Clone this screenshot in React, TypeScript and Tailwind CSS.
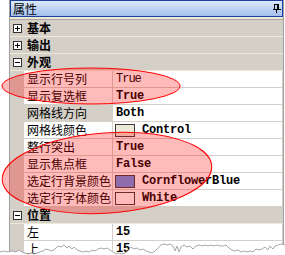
import React from "react";

const TORN: [number, number][] = [
  [0, 252], [4, 251], [8, 252], [12, 251], [16, 252], [19, 250], [22, 252], [25, 253], [28, 254], [31, 253],
  [34, 254], [37, 253], [40, 252], [43, 251], [46, 249], [49, 250], [52, 251], [55, 249], [58, 246], [61, 247],
  [64, 245], [67, 248], [69, 246], [72, 249], [74, 247], [77, 250], [80, 251], [83, 252], [86, 251], [89, 252],
  [92, 250], [95, 251], [98, 249], [101, 248], [104, 249], [107, 248], [110, 250], [113, 252], [116, 254], [119, 253],
  [122, 254], [125, 253], [128, 251], [131, 247], [134, 249], [137, 248], [140, 250], [143, 249], [146, 251], [149, 252],
  [152, 253], [155, 251], [158, 248], [161, 245], [164, 244], [167, 245], [170, 244], [173, 246], [175, 251], [177, 246],
  [179, 252], [181, 247], [184, 245], [187, 247], [190, 246], [193, 249], [196, 246], [199, 245], [202, 246], [205, 245],
  [208, 246], [211, 245], [214, 246], [217, 245], [220, 246], [223, 246], [226, 245], [229, 248], [232, 250], [235, 251],
  [238, 250], [241, 252], [244, 251], [247, 252], [250, 251], [253, 252], [256, 249], [259, 250], [262, 249], [265, 247],
  [268, 250], [270, 246], [273, 249], [275, 246], [278, 245], [281, 244], [285, 245],
];

function ExpandBox({ open }: { open: boolean }) {
  return (
    <svg width="9" height="9" viewBox="0 0 9 9" className="ml-[3px] shrink-0">
      <rect x="0.5" y="0.5" width="8" height="8" fill="white" stroke="#303030" />
      <rect x="2" y="4" width="5" height="1" fill="#000" />
      {!open && <rect x="4" y="2" width="1" height="5" fill="#000" />}
    </svg>
  );
}

function Category({ label, open }: { label: string; open: boolean }) {
  return (
    <div className="h-[17px] flex items-center bg-[#d4d0c8] border-b border-[#ece9d8]">
      <ExpandBox open={open} />
      <span className="ml-[5px] text-[12px] leading-[16px] font-bold text-black font-['Noto_Sans_CJK_SC','Noto_Sans',sans-serif]">
        {label}
      </span>
    </div>
  );
}

function Prop({
  name,
  value,
  bold = true,
  swatch,
  selected = false,
}: {
  name: string;
  value: string;
  bold?: boolean;
  swatch?: string;
  selected?: boolean;
}) {
  return (
    <div className="h-[17px] flex border-b border-[#d4d0c8]">
      <div className="w-[14px] shrink-0 bg-[#d4d0c8]" />
      <div
        className={
          selected
            ? "w-[88px] shrink-0 flex items-center pl-[3px] bg-[#d4d0c8] overflow-hidden whitespace-nowrap"
            : "w-[88px] shrink-0 flex items-center pl-[3px] bg-white overflow-hidden whitespace-nowrap"
        }
      >
        <span className="text-[12px] leading-[16px] text-black font-['Noto_Sans_CJK_SC','Noto_Sans',sans-serif]">{name}</span>
      </div>
      <div className="w-[170px] shrink-0 flex items-center border-l border-[#d4d0c8] bg-white whitespace-nowrap">
        {swatch && (
          <span className="ml-[2px] w-[20px] h-[13px] shrink-0 border border-[#3a3a3a]" style={{ backgroundColor: swatch }} />
        )}
        <span
          className={
            bold
              ? "text-[12px] leading-[16px] text-black font-bold tracking-[-0.2px] font-['Liberation_Mono',monospace]"
              : "text-[12px] leading-[16px] text-black tracking-[-1px] font-['Liberation_Mono',monospace]"
          }
          style={{ marginLeft: swatch ? 7 : 3 }}
        >
          {value}
        </span>
      </div>
    </div>
  );
}

function Pin() {
  return (
    <svg width="8" height="9" viewBox="0 0 8 9" className="shrink-0">
      <rect x="1" y="0" width="5" height="1" fill="#000" />
      <rect x="1" y="0" width="1" height="5" fill="#000" />
      <rect x="4" y="0" width="2" height="5" fill="#000" />
      <rect x="0" y="5" width="8" height="1" fill="#000" />
      <rect x="3" y="6" width="1" height="3" fill="#000" />
    </svg>
  );
}

export default function App() {
  const pts = TORN.map(([x, y]) => `${x},${y}`).join(" ");
  return (
    <div className="relative w-[285px] h-[255px] overflow-hidden bg-white">
      <div className="ml-[9px] w-[275px] h-[255px] border-l border-r border-[#a0a0a0] bg-[#d4d0c8]">
        <div className="h-[17px] flex items-center justify-between border border-[#1e3f9e] bg-gradient-to-b from-[#dde9f9] to-[#a3bfeb] pl-[2px] pr-[1px]">
          <span className="text-[12px] leading-[15px] text-black font-['Noto_Sans_CJK_SC','Noto_Sans',sans-serif]">属性</span>
          <Pin />
        </div>
        <div className="h-[2px] bg-[#ece9d8]" />
        <div className="border-t border-[#aca899]">
          <Category label="基本" open={false} />
          <Category label="输出" open={false} />
          <Category label="外观" open={true} />
          <Prop name="显示行号列" value="True" bold={false} />
          <Prop name="显示复选框" value="True" />
          <Prop name="网格线方向" value="Both" selected />
          <Prop name="网格线颜色" value="Control" swatch="#ece9d8" />
          <Prop name="整行突出" value="True" />
          <Prop name="显示焦点框" value="False" />
          <Prop name="选定行背景颜色" value="CornflowerBlue" swatch="#6495ed" />
          <Prop name="选定行字体颜色" value="White" swatch="#ffffff" />
          <Category label="位置" open={true} />
          <Prop name="左" value="15" />
          <Prop name="上" value="15" />
        </div>
      </div>
      <svg className="absolute inset-0 pointer-events-none" width="285" height="255" viewBox="0 0 285 255">
        <ellipse cx="91" cy="86" rx="89" ry="18" fill="rgba(255,0,0,0.27)" stroke="#ff0000" strokeWidth="1" />
        <ellipse
          cx="107"
          cy="173"
          rx="105"
          ry="40"
          transform="rotate(-4 107 173)"
          fill="rgba(255,0,0,0.27)"
          stroke="#ff0000"
          strokeWidth="1"
        />
        <polygon points={`${pts} 285,255 0,255`} fill="#ffffff" />
        <polyline points={pts} fill="none" stroke="#a8a8a8" strokeWidth="1" />
      </svg>
    </div>
  );
}
